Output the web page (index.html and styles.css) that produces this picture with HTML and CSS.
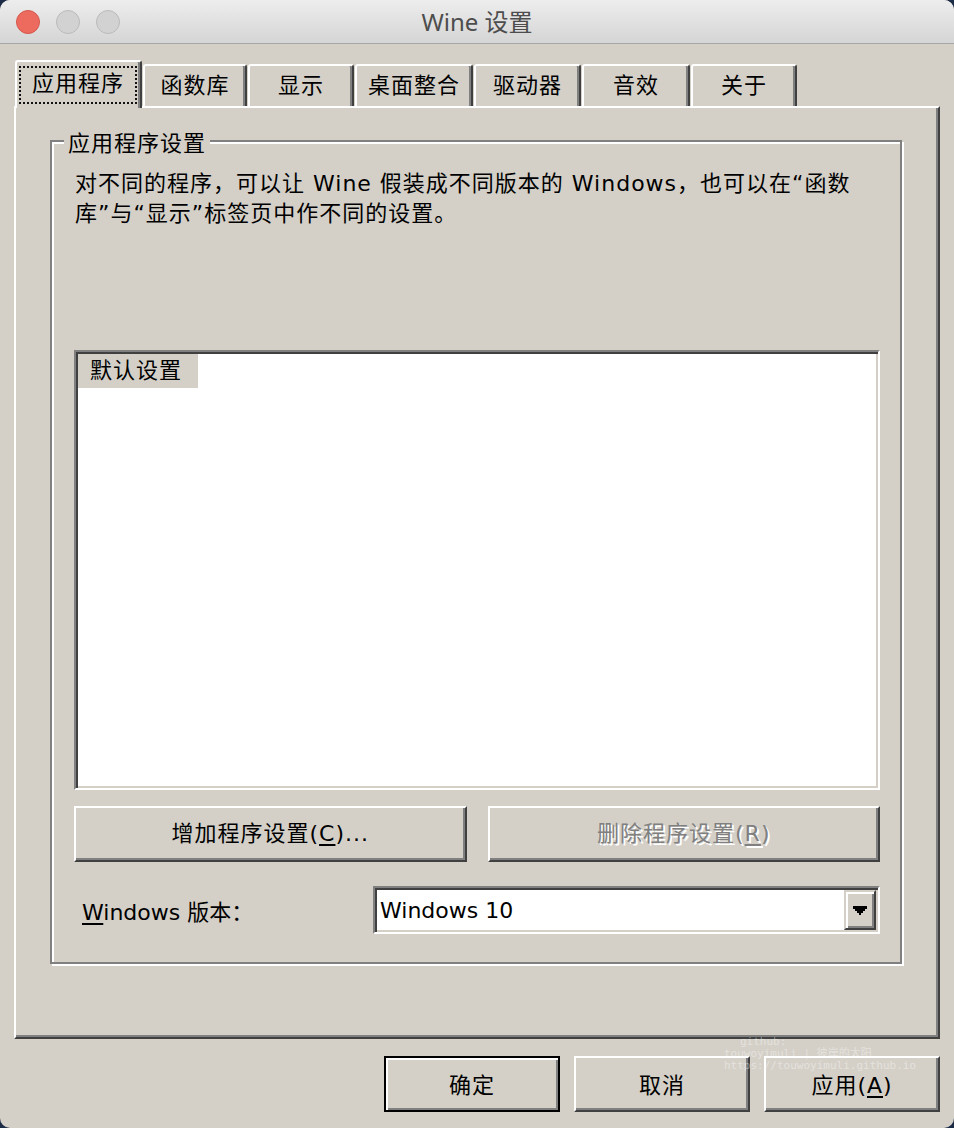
FILE: index.html
```html
<!DOCTYPE html>
<html lang="zh-CN">
<head>
<meta charset="utf-8">
<title>Wine 设置</title>
<link rel="stylesheet" href="styles.css">
</head>
<body>
<div class="window">
  <div class="titlebar">
    <div class="lights">
      <span class="light close"></span>
      <span class="light"></span>
      <span class="light"></span>
    </div>
    <div class="title">Wine 设置</div>
    <div></div>
  </div>
  <div class="main">
    <div class="tabs">
      <div class="tab active"><span class="focus">应用程序</span></div>
      <div class="tab">函数库</div>
      <div class="tab">显示</div>
      <div class="tab">桌面整合</div>
      <div class="tab">驱动器</div>
      <div class="tab">音效</div>
      <div class="tab">关于</div>
    </div>
    <div class="panel">
      <div class="group">
        <div class="legend">应用程序设置</div>
        <p class="desc">对不同的程序，可以让 Wine 假装成不同版本的 Windows，也可以在“函数<br>库”与“显示”标签页中作不同的设置。</p>
        <div class="list">
          <div class="item">默认设置</div>
        </div>
        <div class="btn-row">
          <button class="btn">增加程序设置(<u>C</u>)...</button>
          <button class="btn disabled">删除程序设置(<u>R</u>)</button>
        </div>
        <div class="version-row">
          <span class="version-label"><u>W</u>indows 版本：</span>
          <div class="combo">
            <span class="combo-text">Windows 10</span>
            <span class="combo-btn">
              <svg width="14" height="9" viewBox="0 0 14 9"><path d="M0 0H14V3H12V5H10V7H8V9H6V7H4V5H2V3H0Z" fill="#000"/></svg>
            </span>
          </div>
        </div>
      </div>
    </div>
    <div class="footer">
      <button class="btn fbtn default">确定</button>
      <button class="btn fbtn">取消</button>
      <button class="btn fbtn">应用(<u>A</u>)</button>
    </div>
  </div>
  <div class="watermark">
    <div class="wm1">github:</div>
    <div class="wm2">touwoyimuli | 彼岸的太阳</div>
    <div class="wm3">https://touwoyimuli.github.io</div>
  </div>
</div>
</body>
</html>
```

FILE: styles.css
```css
* {
  box-sizing: border-box;
}

html,
body {
  margin: 0;
  padding: 0;
}

body {
  width: 954px;
  height: 1128px;
  overflow: hidden;
  background: #1d2c46;
  font-family: "DejaVu Sans", "Noto Sans CJK SC", sans-serif;
}

.window {
  position: relative;
  width: 954px;
  height: 1128px;
  background: #d4d0c8;
  border-radius: 10px;
  overflow: hidden;
  display: flex;
  flex-direction: column;
}

/* ---------- title bar ---------- */
.titlebar {
  flex: none;
  height: 44px;
  display: grid;
  grid-template-columns: 1fr auto 1fr;
  align-items: center;
  background: linear-gradient(#ededed, #d5d5d5);
  border-bottom: 1px solid #a7a7a7;
}

.lights {
  display: flex;
  gap: 16px;
  padding-left: 16px;
}

.light {
  width: 24px;
  height: 24px;
  border-radius: 50%;
  background: #d2d2d2;
  border: 1px solid #bababa;
}

.light.close {
  background: #ed6a5e;
  border-color: #d4574c;
}

.title {
  font-family: "Noto Sans", "Noto Sans CJK SC", sans-serif;
  font-size: 24px;
  line-height: 30px;
  color: #4d4d4d;
}

/* ---------- main area ---------- */
.main {
  padding: 16px 14px 0;
  font-size: 22px;
  color: #000;
}

.tabs {
  position: relative;
  z-index: 1;
  display: flex;
  align-items: flex-start;
  height: 48px;
  margin-bottom: -2px;
  padding-left: 1px;
}

.tab {
  height: 42px;
  margin-top: 4px;
  margin-right: 1px;
  display: flex;
  align-items: center;
  justify-content: center;
  padding-bottom: 1px;
  line-height: 26px;
  background: #d4d0c8;
  border-top: 2px solid #fff;
  border-left: 2px solid #fff;
  border-right: 2px solid #404040;
  border-top-left-radius: 3px;
  border-top-right-radius: 3px;
  box-shadow: inset -2px 0 0 #808080;
  letter-spacing: 1px;
  white-space: nowrap;
}

.tab:nth-child(1) { width: 127px; }
.tab:nth-child(2) { width: 104px; }
.tab:nth-child(3) { width: 106px; }
.tab:nth-child(4) { width: 118px; }
.tab:nth-child(5) { width: 107px; }
.tab:nth-child(6) { width: 108px; }
.tab:nth-child(7) { width: 106px; }

.tab.active {
  height: 48px;
  margin-top: 0;
  padding-bottom: 0;
  align-items: flex-start;
  justify-content: flex-start;
}

.focus {
  display: flex;
  align-items: center;
  justify-content: center;
  width: 118px;
  height: 38px;
  margin: 4px 0 0 2px;
  padding-bottom: 2px;
  border: 2px dotted #111;
}

.panel {
  height: 933px;
  padding: 32px 36px 0 34px;
  border: 2px solid;
  border-color: #fff #404040 #404040 #fff;
  box-shadow: inset -2px -2px 0 #808080;
}

/* ---------- group box ---------- */
.group {
  position: relative;
  padding: 27px 20px 28px 22px;
  border: 2px solid #808080;
  box-shadow: inset 2px 2px 0 #fff, 2px 2px 0 #fff;
}

.legend {
  position: absolute;
  left: 12px;
  top: -11px;
  padding: 0 4px;
  line-height: 26px;
  background: #d4d0c8;
  letter-spacing: 1px;
}

.desc {
  margin: 0;
  padding-left: 1px;
  line-height: 30px;
  letter-spacing: 1px;
  white-space: nowrap;
}

.list {
  height: 440px;
  margin-top: 121px;
  background: #fff;
  border: 2px solid;
  border-color: #808080 #fff #fff #808080;
  box-shadow: inset 2px 2px 0 #404040, inset -2px -2px 0 #d4d0c8;
  padding: 2px;
}

.item {
  display: inline-block;
  height: 34px;
  line-height: 34px;
  padding: 0 16px 0 12px;
  background: #d4d0c8;
  letter-spacing: 1px;
}

.btn-row {
  display: flex;
  gap: 21px;
  margin-top: 16px;
}

.btn {
  height: 56px;
  margin: 0;
  padding: 0;
  font: inherit;
  font-size: 22px;
  line-height: 24px;
  color: #000;
  background: #d4d0c8;
  border: 2px solid;
  border-color: #fff #404040 #404040 #fff;
  box-shadow: inset -2px -2px 0 #808080;
  letter-spacing: 1px;
  white-space: nowrap;
}

.btn-row .btn {
  flex: 1;
}

.btn.disabled {
  color: #808080;
  text-shadow: 2px 2px 0 #fff;
}

u {
  text-underline-offset: 3px;
  text-decoration-thickness: 2px;
}

.version-row {
  display: flex;
  align-items: center;
  justify-content: space-between;
  margin-top: 24px;
}

.version-label {
  padding-left: 8px;
  white-space: nowrap;
}

.combo {
  width: 507px;
  height: 48px;
  display: flex;
  padding: 2px;
  background: #fff;
  border: 2px solid;
  border-color: #808080 #fff #fff #808080;
  box-shadow: inset 2px 2px 0 #404040, inset -2px -2px 0 #d4d0c8;
}

.combo-text {
  flex: 1;
  align-self: center;
  padding-left: 3px;
  white-space: nowrap;
}

.combo-btn {
  width: 32px;
  height: 40px;
  display: flex;
  align-items: center;
  justify-content: center;
  background: #d4d0c8;
  border: 2px solid;
  border-color: #d4d0c8 #404040 #404040 #d4d0c8;
  box-shadow: inset 2px 2px 0 #fff, inset -2px -2px 0 #808080;
}

/* ---------- footer ---------- */
.footer {
  display: flex;
  justify-content: flex-end;
  gap: 14px;
  margin-top: 17px;
}

.fbtn {
  width: 176px;
  padding-top: 3px;
}

.fbtn.default {
  border-color: #000;
  box-shadow: inset 2px 2px 0 #fff, inset -2px -2px 0 #808080;
}

/* ---------- watermark ---------- */
.watermark {
  position: absolute;
  left: 724px;
  top: 1036px;
  font-family: "DejaVu Sans Mono", "Noto Sans CJK SC", monospace;
  font-size: 11px;
  line-height: 12px;
  color: rgba(255, 255, 255, 0.4);
  pointer-events: none;
}

.wm1 {
  padding-left: 16px;
}
```
